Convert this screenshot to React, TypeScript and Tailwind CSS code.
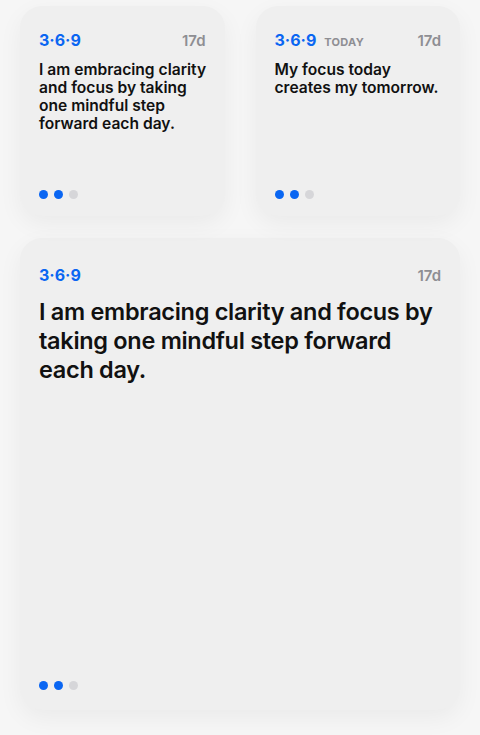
const cards = [
  {
    text: "I am embracing clarity and focus by taking one mindful step forward each day.",
    today: false,
  },
  {
    text: "My focus today creates my tomorrow.",
    today: true,
  },
];

function Dots() {
  return (
    <div className="flex items-center gap-[6px]">
      <span className="h-[9px] w-[9px] rounded-full bg-[#0a66f2]" />
      <span className="h-[9px] w-[9px] rounded-full bg-[#0a66f2]" />
      <span className="h-[9px] w-[9px] rounded-full bg-[#d6d6d9]" />
    </div>
  );
}

function Header({ today }: { today?: boolean }) {
  return (
    <div className="flex items-baseline justify-between">
      <div className="flex items-baseline gap-2">
        <span className="text-[16px] font-bold leading-5 text-[#0a66f2]">3·6·9</span>
        {today && (
          <span className="text-[11px] font-bold tracking-wide text-[#8e8e93]">TODAY</span>
        )}
      </div>
      <span className="text-[15px] font-semibold text-[#8e8e93]">17d</span>
    </div>
  );
}

export default function App() {
  return (
    <div
      className="min-h-screen bg-[#f6f6f6] px-5 pt-[6px]"
      style={{ fontFamily: "Inter, 'Liberation Sans', sans-serif" }}
    >
      <div className="grid grid-cols-2 gap-[31px]">
        {cards.map((c, i) => (
          <div
            key={i}
            className="flex h-[210px] flex-col justify-between rounded-[22px] bg-[#efefef] px-[19px] pb-[17px] pt-[24px] shadow-[0_8px_24px_rgba(0,0,0,0.05)]"
          >
            <div>
              <Header today={c.today} />
              <p className="mr-[-8px] mt-[8px] text-[15.6px] font-semibold leading-[18px] text-[#111]">
                {c.text}
              </p>
            </div>
            <Dots />
          </div>
        ))}
      </div>

      <div className="mt-[22px] flex h-[472px] flex-col justify-between rounded-[22px] bg-[#efefef] px-[19px] pb-[20px] pt-[27px] shadow-[0_8px_24px_rgba(0,0,0,0.05)]">
        <div>
          <Header />
          <p className="mt-[9px] text-[23.5px] font-semibold leading-[29px] tracking-[-0.3px] text-[#111]">
            I am embracing clarity and focus by taking one mindful step forward each day.
          </p>
        </div>
        <Dots />
      </div>
    </div>
  );
}
